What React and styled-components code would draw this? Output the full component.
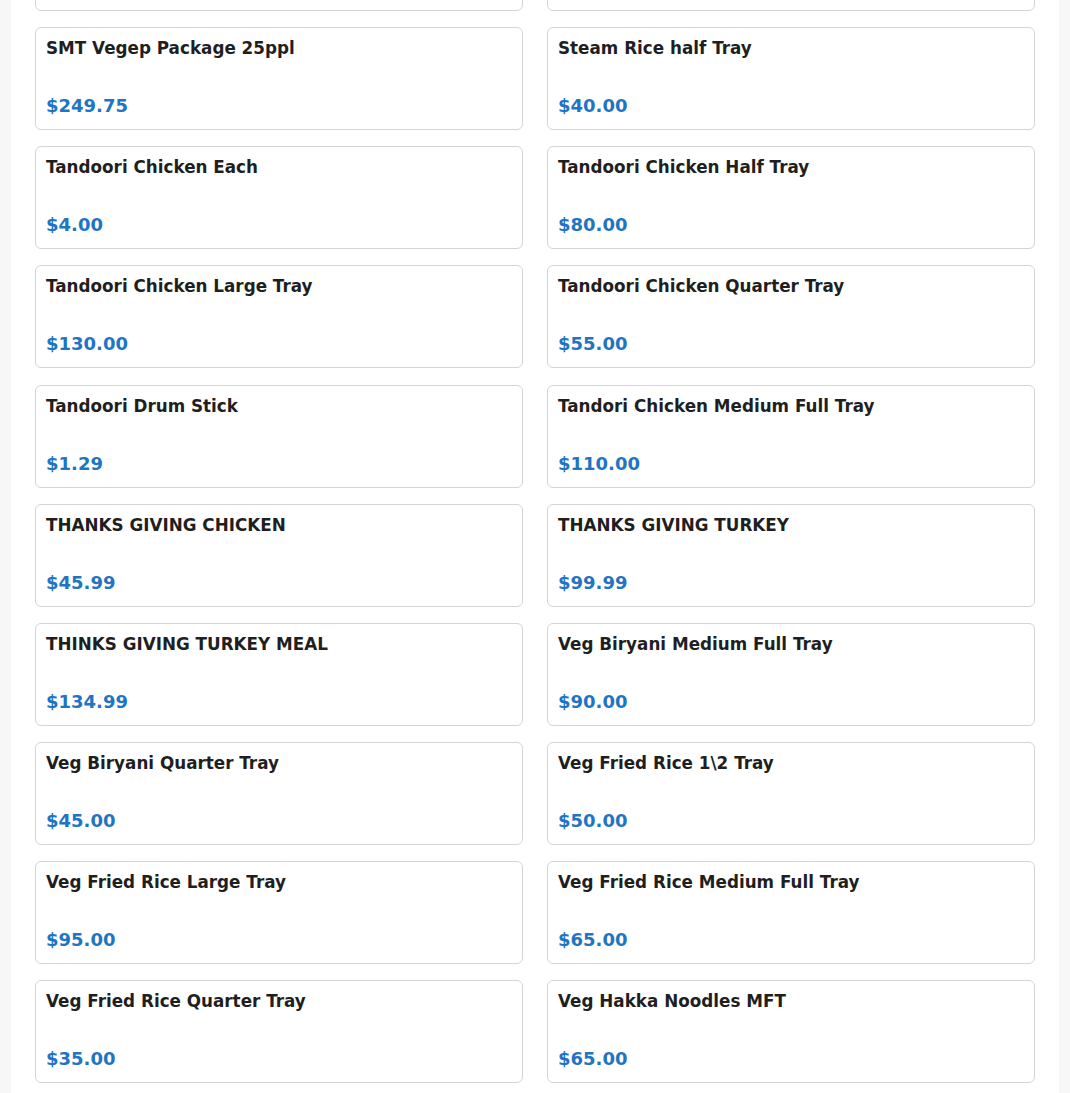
import React from 'react';
import styled, { createGlobalStyle } from 'styled-components';

const GlobalStyle = createGlobalStyle`
  html, body {
    margin: 0;
    padding: 0;
    background: #f7f7f7;
    font-family: "DejaVu Sans", "Noto Sans", sans-serif;
  }
`;

const Page = styled.div`
  max-width: 1048px;
  margin: 0 auto;
  background: #ffffff;
  height: 1093px;
  overflow: hidden;
`;

const Grid = styled.div`
  display: grid;
  grid-template-columns: 1fr 1fr;
  column-gap: 24px;
  row-gap: 16.125px;
  padding: 0 24px;
  /* the list is scrolled: the previous row peeks in at the top */
  margin-top: -92px;
`;

const Card = styled.div`
  border: 1px solid #d4d4d4;
  border-radius: 6px;
  padding: 10px 10px 13px;
  height: 78px;
  display: flex;
  flex-direction: column;
  justify-content: space-between;
  background: #fff;
`;

const Name = styled.div`
  font-size: 16.8px;
  font-weight: bold;
  color: #1f1f1f;
`;

const Price = styled.div`
  font-size: 18px;
  font-weight: bold;
  color: #1f74c4;
`;

const items = [
  ['SMT Veg Package 20ppl', '$199.75'],
  ['Steam Rice Full Tray', '$70.00'],
  ['SMT Vegep Package 25ppl', '$249.75'],
  ['Steam Rice half Tray', '$40.00'],
  ['Tandoori Chicken Each', '$4.00'],
  ['Tandoori Chicken Half Tray', '$80.00'],
  ['Tandoori Chicken Large Tray', '$130.00'],
  ['Tandoori Chicken Quarter Tray', '$55.00'],
  ['Tandoori Drum Stick', '$1.29'],
  ['Tandori Chicken Medium Full Tray', '$110.00'],
  ['THANKS GIVING CHICKEN', '$45.99'],
  ['THANKS GIVING TURKEY', '$99.99'],
  ['THINKS GIVING TURKEY MEAL', '$134.99'],
  ['Veg Biryani Medium Full Tray', '$90.00'],
  ['Veg Biryani Quarter Tray', '$45.00'],
  ['Veg Fried Rice 1\\2 Tray', '$50.00'],
  ['Veg Fried Rice Large Tray', '$95.00'],
  ['Veg Fried Rice Medium Full Tray', '$65.00'],
  ['Veg Fried Rice Quarter Tray', '$35.00'],
  ['Veg Hakka Noodles MFT', '$65.00'],
  ['Veg Manchurian Half Tray', '$60.00'],
  ['Veg Noodles Quarter Tray', '$35.00'],
];

const App = () => (
  <>
    <GlobalStyle />
    <Page>
      <Grid>
        {items.map(([name, price]) => (
          <Card key={name}>
            <Name>{name}</Name>
            <Price>{price}</Price>
          </Card>
        ))}
      </Grid>
    </Page>
  </>
);

export default App;
